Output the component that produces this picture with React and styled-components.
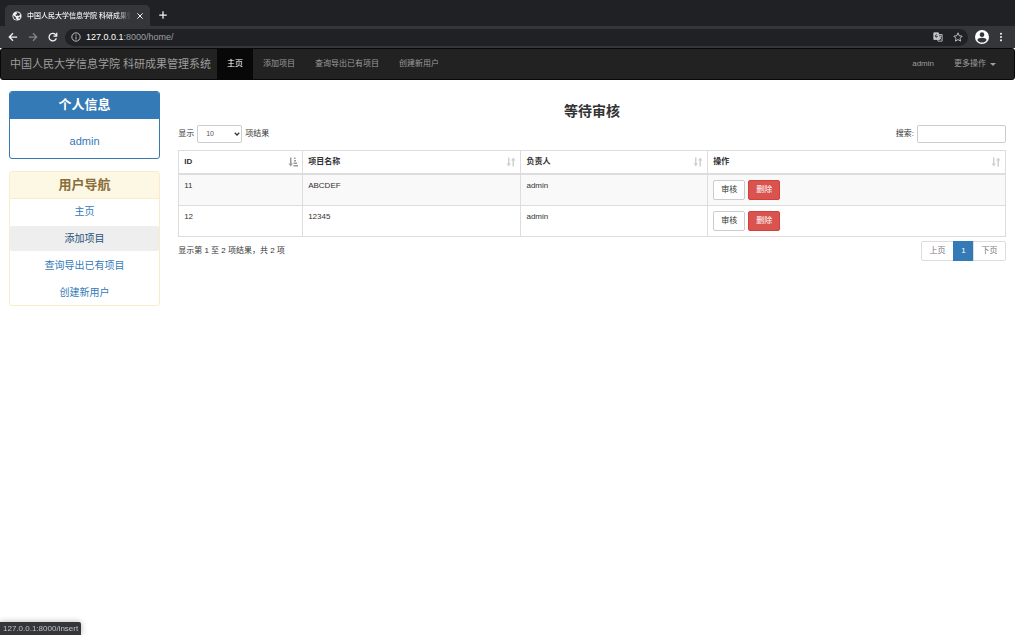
import React, { useState } from 'react';
import styled, { createGlobalStyle, css } from 'styled-components';

const GlobalStyle = createGlobalStyle`
  * {
    box-sizing: border-box;
  }
  body {
    margin: 0;
    background: #fff;
    color: #333;
    font-family: "Liberation Sans", "Noto Sans CJK SC", sans-serif;
    font-size: 8px;
    line-height: 12px;
  }
  button, input, select {
    font: inherit;
  }
  a {
    text-decoration: none;
  }
`

/* browser window */

const TabStrip = styled.div`
  display: flex;
  align-items: flex-end;
  height: 26px;
  padding-left: 5px;
  background: #202124;
`

const BrowserTab = styled.div`
  display: flex;
  align-items: center;
  gap: 5px;
  width: 145px;
  height: 21px;
  padding: 0 6px 0 7px;
  border-radius: 5px 5px 0 0;
  background: #35363a;
  color: #f1f3f4;
`

const TabTitle = styled.span`
  flex: 1;
  overflow: hidden;
  white-space: nowrap;
  font-size: 7px;
  font-weight: 500;
  mask-image: linear-gradient(to right, #000 85%, transparent);
`

const IconButton = styled.button`
  display: flex;
  align-items: center;
  justify-content: center;
  width: ${props => props.$size || 10}px;
  height: ${props => props.$size || 10}px;
  padding: 0;
  border: 0;
  background: none;
  color: ${props => props.$color || '#f1f3f4'};
`

const NewTab = styled(IconButton)`
  margin: 0 0 6px 8px;
`

const Toolbar = styled.div`
  display: flex;
  align-items: center;
  gap: 7px;
  height: 22px;
  padding: 0 9px 0 8px;
  background: #35363a;
`

const IconGroup = styled.div`
  display: flex;
  gap: 10px;
`

const AddressBar = styled.div`
  flex: 1;
  display: flex;
  align-items: center;
  gap: 5px;
  height: 17px;
  padding: 0 5px 0 6px;
  border-radius: 9px;
  background: #202124;
  color: #9aa0a6;
  font-size: 9px;
`

const Address = styled.span`
  flex: 1;
  b {
    color: #fff;
    font-weight: 400;
  }
`

const StatusBubble = styled.div`
  position: fixed;
  left: 0;
  bottom: 0;
  height: 13px;
  padding: 0 3px;
  border-radius: 0 2px 0 0;
  background: #35363a;
  color: #bdc1c6;
  font-size: 8px;
  line-height: 13px;
  box-shadow: 0 0 6px rgba(0, 0, 0, 0.3);
`

/* page */

const Navbar = styled.nav`
  display: flex;
  height: 32px;
  border: 1px solid #080808;
  border-radius: 3px;
  background: #222;
  color: #9d9d9d;
`

const Brand = styled.a`
  display: flex;
  align-items: center;
  padding: 0 6px 0 9px;
  color: #9d9d9d;
  font-size: 11px;
`

const NavLink = styled.a`
  display: flex;
  align-items: center;
  gap: 4px;
  padding: 0 10px;
  color: ${props => props.$active ? '#fff' : '#9d9d9d'};
  background: ${props => props.$active ? '#080808' : 'transparent'};
`

const NavRight = styled.div`
  display: flex;
  margin-left: auto;
  padding-right: 8px;
`

const Caret = styled.span`
  border-top: 3px solid;
  border-left: 3px solid transparent;
  border-right: 3px solid transparent;
`

const Row = styled.div`
  display: grid;
  grid-template-columns: minmax(0, 1fr) minmax(0, 5fr);
  margin-top: 11px;
`

const Column = styled.div`
  padding: 0 9px;
`

const Panel = styled.section`
  margin-bottom: 12px;
  border: 1px solid ${props => props.$warning ? '#faebcc' : '#337ab7'};
  border-radius: 3px;
  text-align: center;
`

const PanelHeading = styled.h3`
  margin: 0;
  border-bottom: 1px solid ${props => props.$warning ? '#faebcc' : '#337ab7'};
  border-radius: 2px 2px 0 0;
  background: ${props => props.$warning ? '#fcf8e3' : '#337ab7'};
  color: ${props => props.$warning ? '#8a6d3b' : '#fff'};
  font-size: 13px;
  font-weight: 700;
  line-height: 26px;
`

const PanelBody = styled.div`
  padding: 13px 9px 7px;
  font-size: 11px;
  line-height: 19px;
  a {
    color: #337ab7;
  }
`

const SideNav = styled.div`
  display: flex;
  flex-direction: column;
  gap: 2px;
`

const SideLink = styled.a`
  border-radius: 2px;
  background: ${props => props.$hover ? '#eee' : 'transparent'};
  color: ${props => props.$hover ? '#23527c' : '#337ab7'};
  font-size: 10px;
  line-height: 25px;
`

const Title = styled.h3`
  margin: 12px 0 5px;
  font-size: 14px;
  font-weight: 700;
  line-height: 17px;
  text-align: center;
`

const Bar = styled.div`
  display: flex;
  align-items: center;
  justify-content: space-between;
`

const Label = styled.label`
  display: flex;
  align-items: center;
  gap: 3px;
`

const field = css`
  height: 18px;
  border: 1px solid #ccc;
  border-radius: 2px;
  background: #fff;
  color: #555;
  font-size: 7px;
`

const SelectBox = styled.span`
  display: grid;
  align-items: center;
  width: 45px;
  select, svg {
    grid-area: 1 / 1;
  }
  svg {
    justify-self: end;
    margin-right: 2px;
    pointer-events: none;
  }
`

const Select = styled.select`
  ${field}
  width: 100%;
  padding: 0 8px;
  appearance: none;
`

const SearchInput = styled.input`
  ${field}
  width: 89px;
  padding: 0 6px;
`

const Table = styled.table`
  width: 100%;
  margin: 7px 0 4px;
  border-collapse: collapse;
  table-layout: fixed;
  th, td {
    padding: 5px;
    border: 1px solid #ddd;
    text-align: left;
    vertical-align: top;
  }
  th {
    padding-right: 4px;
    border-bottom-width: 2px;
    font-weight: 700;
  }
  tbody tr:nth-child(odd) {
    background: #f9f9f9;
  }
`

const HeaderCell = styled.div`
  display: flex;
  align-items: center;
  justify-content: space-between;
`

const Actions = styled.div`
  display: flex;
  gap: 3px;
`

const Button = styled.button`
  width: 32px;
  height: 20px;
  padding: 0;
  border: 1px solid ${props => props.$danger ? '#d43f3a' : '#ccc'};
  border-radius: 2px;
  background: ${props => props.$danger ? '#d9534f' : '#fff'};
  color: ${props => props.$danger ? '#fff' : '#333'};
`

const Pagination = styled.div`
  display: flex;
  button:first-child {
    border-radius: 2px 0 0 2px;
  }
  button:last-child {
    border-radius: 0 2px 2px 0;
  }
`

const PageButton = styled.button`
  width: ${props => props.$active ? 21 : 33}px;
  height: 20px;
  margin-left: -1px;
  padding: 0;
  border: 1px solid ${props => props.$active ? '#337ab7' : '#ddd'};
  background: ${props => props.$active ? '#337ab7' : '#fff'};
  color: ${props => props.$active ? '#fff' : '#777'};
`

function Icon({ size = 10, children, width = 2 }) {
  return <svg width={size} height={size} viewBox="0 0 24 24" fill="none" stroke="currentColor" strokeWidth={width} aria-hidden="true">{children}</svg>
}

function SortIcon({ active }) {
  return <svg width="10" height="10" viewBox="0 0 20 20" fill={active ? '#999' : '#d0d0d0'} aria-hidden="true">
    <path d="M4 1h3v12h3l-4.500 6L1 13h3z" />
    {active
      ? <path d="M12 1h3v3h-3zM12 6h4v3h-4zM11 11h7v3h-7zM11 16h9v3h-9z" />
      : <path d="M13 19h3V7h3l-4.500-6L10 7h3z" />}
  </svg>
}

const navLinks = ['主页', '添加项目', '查询导出已有项目', '创建新用户']

const columns = [
  { name: 'ID', width: '15%' },
  { name: '项目名称', width: '26.400%' },
  { name: '负责人', width: '22.600%' },
  { name: '操作', width: '36%' },
]

const projects = [
  { id: 11, name: 'ABCDEF', owner: 'admin' },
  { id: 12, name: '12345', owner: 'admin' },
]

function BrowserBar() {
  return <header>
    <TabStrip>
      <BrowserTab>
        <svg width="10" height="10" viewBox="0 0 24 24" aria-hidden="true">
          <circle cx="12" cy="12" r="11" fill="#f1f3f4" />
          <path d="M3 10l6 5v2l3 4c-5 0-9-4-9-11zM11 3c5 0 8 3 9 6l-4 3-2-1-4 1-2-3 4-2zM17 14l3 1-3 4-2-2z" fill="#35363a" />
        </svg>
        <TabTitle>中国人民大学信息学院 科研成果管理系统</TabTitle>
        <IconButton aria-label="关闭标签页" $size={8}><Icon size={8} width={3}><path d="M4 4l16 16M20 4L4 20" /></Icon></IconButton>
      </BrowserTab>
      <NewTab aria-label="新标签页"><Icon width={3}><path d="M12 3v18M3 12h18" /></Icon></NewTab>
    </TabStrip>
    <Toolbar>
      <IconGroup>
        <IconButton aria-label="后退"><Icon width={3}><path d="M22 12H3M12 3l-9 9 9 9" /></Icon></IconButton>
        <IconButton aria-label="前进" $color="#85868a"><Icon width={3}><path d="M2 12h19M12 3l9 9-9 9" /></Icon></IconButton>
        <IconButton aria-label="重新加载"><Icon width={3}><path d="M20 15a9 9 0 1 1-2-9l3 3M21 2v8h-8" /></Icon></IconButton>
      </IconGroup>
      <AddressBar>
        <IconButton aria-label="网站信息" $color="#dadce0"><Icon><circle cx="12" cy="12" r="10" /><path d="M12 11v7M12 6v3" /></Icon></IconButton>
        <Address><b>127.0.0.1</b>:8000/home/</Address>
        <IconGroup>
          <IconButton aria-label="翻译" $color="#c4c7c9">
            <Icon>
              <path d="M2 2h11l3 16H2z" fill="currentColor" />
              <path d="M14 6h8v16H12l-1-4" />
              <path d="M14 10h7M18 9v2M19 11l-4 7M15 13l5 5" />
              <path d="M10 7a3 3 0 1 0 0 5v-2H8" stroke="#202124" />
            </Icon>
          </IconButton>
          <IconButton aria-label="添加书签" $color="#dadce0"><Icon><path d="M12 2l3 7 7 1-5 5 1 7-6-4-6 4 1-7-5-5 7-1z" /></Icon></IconButton>
        </IconGroup>
      </AddressBar>
      <IconButton aria-label="用户" $size={14}>
        <svg width="14" height="14" viewBox="0 0 24 24" aria-hidden="true">
          <circle cx="12" cy="12" r="12" fill="#fff" />
          <circle cx="12" cy="8" r="4" fill="#35363a" />
          <path d="M4 17c1-5 15-5 16 0-4 6-12 6-16 0z" fill="#35363a" />
        </svg>
      </IconButton>
      <IconButton aria-label="菜单"><Icon><g fill="currentColor" stroke="none"><circle cx="12" cy="4" r="2.500" /><circle cx="12" cy="12" r="2.500" /><circle cx="12" cy="20" r="2.500" /></g></Icon></IconButton>
    </Toolbar>
  </header>
}

function ProjectTable() {
  return <Table>
    <colgroup>
      {columns.map(column => <col key={column.name} style={{ width: column.width }} />)}
    </colgroup>
    <thead>
      <tr>
        {columns.map((column, i) => <th key={column.name}>
          <HeaderCell>{column.name}<SortIcon active={i === 0} /></HeaderCell>
        </th>)}
      </tr>
    </thead>
    <tbody>
      {projects.map(project => <tr key={project.id}>
        <td>{project.id}</td>
        <td>{project.name}</td>
        <td>{project.owner}</td>
        <td>
          <Actions>
            <Button>审核</Button>
            <Button $danger>删除</Button>
          </Actions>
        </td>
      </tr>)}
    </tbody>
  </Table>
}

function App() {
  const [search, setSearch] = useState("")

  return <>
    <GlobalStyle />
    <BrowserBar />
    <Navbar>
      <Brand href="#">中国人民大学信息学院 科研成果管理系统</Brand>
      {navLinks.map((link, i) => <NavLink key={link} href="#" $active={i === 0}>{link}</NavLink>)}
      <NavRight>
        <NavLink href="#">admin</NavLink>
        <NavLink href="#">更多操作 <Caret /></NavLink>
      </NavRight>
    </Navbar>
    <Row>
      <Column>
        <Panel>
          <PanelHeading>个人信息</PanelHeading>
          <PanelBody><a href="#">admin</a></PanelBody>
        </Panel>
        <Panel $warning>
          <PanelHeading $warning>用户导航</PanelHeading>
          <SideNav>
            {navLinks.map((link, i) => <SideLink key={link} href="#" $hover={i === 1}>{link}</SideLink>)}
          </SideNav>
        </Panel>
      </Column>
      <Column>
        <Title>等待审核</Title>
        <Bar>
          <Label>
            显示
            <SelectBox>
              <Select defaultValue="10">
                <option value="10">10</option>
                <option value="25">25</option>
                <option value="50">50</option>
              </Select>
              <Icon size={6} width={5}><path d="M3 7l9 9 9-9" /></Icon>
            </SelectBox>
            项结果
          </Label>
          <Label>
            搜索:
            <SearchInput type="search" value={search} onChange={e => setSearch(e.target.value)} />
          </Label>
        </Bar>
        <ProjectTable />
        <Bar>
          <div>显示第 1 至 2 项结果，共 2 项</div>
          <Pagination>
            <PageButton>上页</PageButton>
            <PageButton $active>1</PageButton>
            <PageButton>下页</PageButton>
          </Pagination>
        </Bar>
      </Column>
    </Row>
    <StatusBubble>127.0.0.1:8000/insert</StatusBubble>
  </>
}

export default App
